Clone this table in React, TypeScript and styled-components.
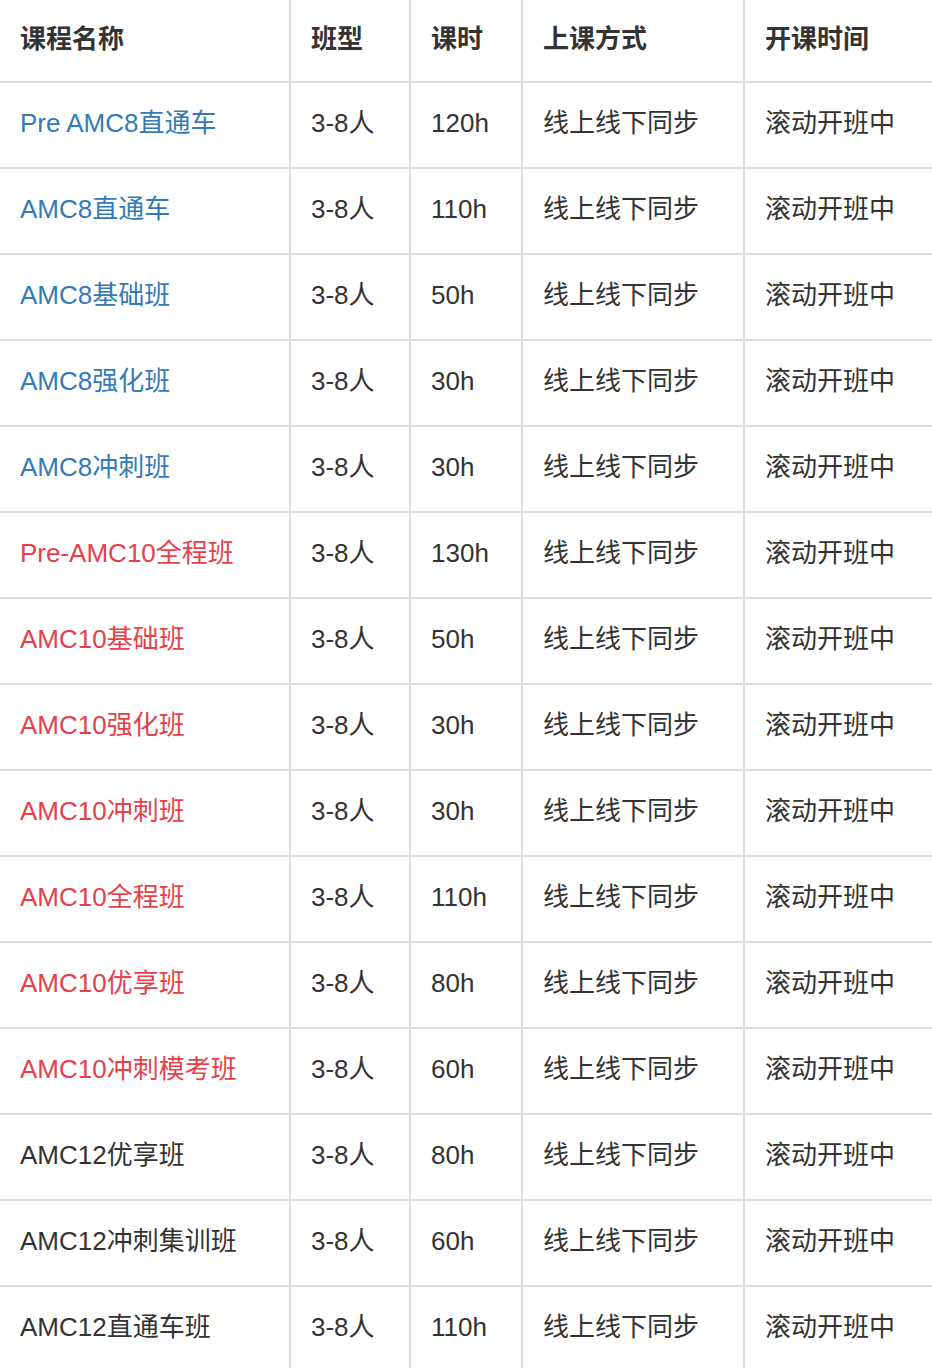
import React from 'react';
import styled, { createGlobalStyle } from 'styled-components';

const GlobalStyle = createGlobalStyle`
  html, body {
    margin: 0;
    padding: 0;
    background: #fff;
    overflow: hidden;
  }
  body {
    font-family: "Liberation Sans", "Noto Sans CJK SC", sans-serif;
    color: #333;
  }
`;

const Table = styled.table`
  width: 934px;
  table-layout: fixed;
  border-collapse: separate;
  border-spacing: 0;
  font-size: 26px;
  line-height: 30px;
`;

const HeadCell = styled.th<{ $w?: number }>`
  width: ${(p) => (p.$w ? `${p.$w}px` : 'auto')};
  height: 83px;
  padding: 0 0 4px 20px;
  text-align: left;
  font-weight: bold;
  font-size: 26px;
  color: #333;
  border-right: 2px solid #ddd;
  border-bottom: 2px solid #ddd;
  box-sizing: border-box;
  vertical-align: middle;
`;

const Cell = styled.td<{ $tone?: 'blue' | 'red' }>`
  height: 86px;
  padding: 0 0 4px 20px;
  box-sizing: border-box;
  color: ${(p) => (p.$tone === 'blue' ? '#337ab7' : p.$tone === 'red' ? '#e6414a' : '#333')};
  border-right: 2px solid #ddd;
  border-bottom: 2px solid #ddd;
  white-space: nowrap;
  vertical-align: middle;
  font-size: 26px;
`;

type Course = { name: string; hours: string; tone?: 'blue' | 'red' };

const courses: Course[] = [
  { name: 'Pre AMC8直通车', hours: '120h', tone: 'blue' },
  { name: 'AMC8直通车', hours: '110h', tone: 'blue' },
  { name: 'AMC8基础班', hours: '50h', tone: 'blue' },
  { name: 'AMC8强化班', hours: '30h', tone: 'blue' },
  { name: 'AMC8冲刺班', hours: '30h', tone: 'blue' },
  { name: 'Pre-AMC10全程班', hours: '130h', tone: 'red' },
  { name: 'AMC10基础班', hours: '50h', tone: 'red' },
  { name: 'AMC10强化班', hours: '30h', tone: 'red' },
  { name: 'AMC10冲刺班', hours: '30h', tone: 'red' },
  { name: 'AMC10全程班', hours: '110h', tone: 'red' },
  { name: 'AMC10优享班', hours: '80h', tone: 'red' },
  { name: 'AMC10冲刺模考班', hours: '60h', tone: 'red' },
  { name: 'AMC12优享班', hours: '80h' },
  { name: 'AMC12冲刺集训班', hours: '60h' },
  { name: 'AMC12直通车班', hours: '110h' },
];

const App = () => {
  return (
    <>
      <GlobalStyle />
      <Table>
        <thead>
          <tr>
            <HeadCell $w={291}>课程名称</HeadCell>
            <HeadCell $w={120}>班型</HeadCell>
            <HeadCell $w={112}>课时</HeadCell>
            <HeadCell $w={222}>上课方式</HeadCell>
            <HeadCell>开课时间</HeadCell>
          </tr>
        </thead>
        <tbody>
          {courses.map((c) => (
            <tr key={c.name}>
              <Cell $tone={c.tone}>{c.name}</Cell>
              <Cell>3-8人</Cell>
              <Cell>{c.hours}</Cell>
              <Cell>线上线下同步</Cell>
              <Cell>滚动开班中</Cell>
            </tr>
          ))}
        </tbody>
      </Table>
    </>
  );
};

export default App;
